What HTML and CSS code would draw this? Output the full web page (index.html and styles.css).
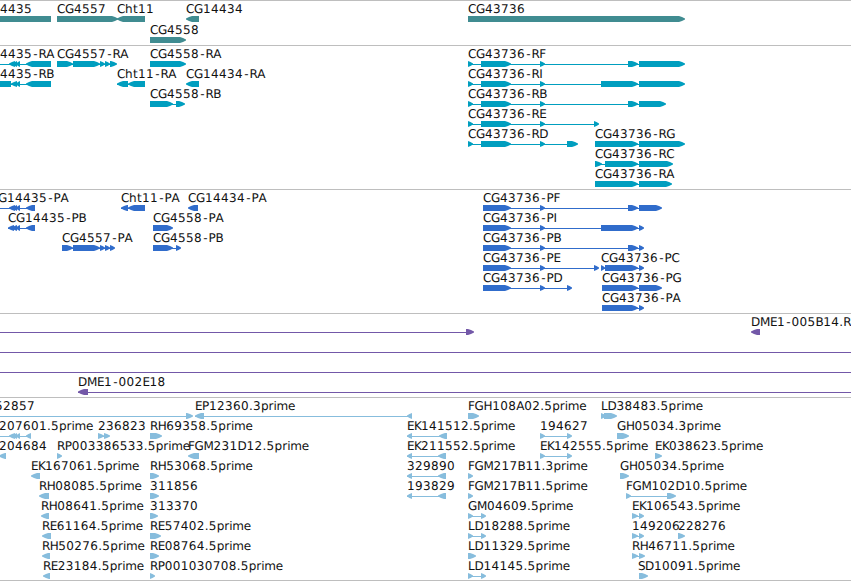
FILE: index.html
```html
<!DOCTYPE html>
<html lang="en">
<head>
    <meta charset="UTF-8">
    <meta name="viewport" content="width=device-width, initial-scale=1.0">
    <title>CG43736 region</title>
    <link rel="stylesheet" href="styles.css">
</head>
<body>
    <main class="browser" id="browser"></main>
    <script src="tracks.js"></script>
</body>
</html>
```
FILE: styles.css
```css
* {
    margin: 0;
    padding: 0;
    box-sizing: border-box;
}

body {
    background: #fff;
    overflow: hidden;
}

.browser {
    display: flex;
    flex-direction: column;
    width: 851px;
    height: 581px;
    border-bottom: 1px solid #bebebe;
}

.track {
    border-top: 1px solid #bebebe;
    overflow: hidden;
}

.track svg {
    display: block;
    width: 851px;
}

.track text {
    font-family: "DejaVu Sans", sans-serif;
    font-size: 12px;
    fill: #111;
    text-rendering: geometricPrecision;
}

.gene {
    color: #408c91;
}

.transcript {
    color: #009ebf;
}

.protein {
    color: #306ccb;
}

.clone {
    color: #7358a8;
}

.est {
    color: #87bddd;
}

.block,
.intron {
    fill: currentColor;
}
```
FILE: tracks.js
```js
// feature: [row, label, label x, strand, blocks, line start, line end]
const tracks = [
    { type: 'gene', height: 44, pitch: 21, features: [
        [0, 'CG14435', -25, 0, [[-25, 51]]],
        [0, 'CG4557', 57, 1, [[57, 118]]],
        [0, 'Cht11', 117, -1, [[117, 145]]],
        [0, 'CG14434', 186, -1, [[186, 199]]],
        [0, 'CG43736', 468, 1, [[468, 685]]],
        [1, 'CG4558', 150, 1, [[150, 186]]]
    ] },
    { type: 'transcript', height: 143, pitch: 20, features: [
        [0, 'CG14435-RA', -25, -1, [[9, 15], [13, 17], [16, 20], [26, 51]], -25],
        [0, 'CG4557-RA', 57, 1, [[57, 73], [73, 100], [100, 105], [105, 110], [110, 117]]],
        [0, 'CG4558-RA', 150, 1, [[150, 186]]],
        [0, 'CG43736-RF', 468, 1, [[468, 473], [481, 511], [540, 545], [628, 638], [639, 685]]],
        [1, 'CG14435-RB', -25, -1, [[-25, 11], [11, 17], [16, 20], [26, 51]]],
        [1, 'Cht11-RA', 117, -1, [[117, 128], [128, 145]]],
        [1, 'CG14434-RA', 186, -1, [[186, 199]]],
        [1, 'CG43736-RI', 468, 1, [[468, 473], [481, 511], [540, 545], [601, 638], [639, 685]]],
        [2, 'CG4558-RB', 150, 1, [[150, 173], [176, 185]]],
        [2, 'CG43736-RB', 468, 1, [[468, 473], [481, 511], [540, 545], [628, 638], [639, 666]]],
        [3, 'CG43736-RE', 468, 1, [[468, 473], [481, 511], [540, 545], [594, 599]]],
        [4, 'CG43736-RD', 468, 1, [[468, 473], [481, 511], [540, 545], [567, 578]]],
        [4, 'CG43736-RG', 595, 1, [[595, 638], [639, 685]]],
        [5, 'CG43736-RC', 595, 1, [[595, 602], [605, 638], [639, 673]]],
        [6, 'CG43736-RA', 595, 1, [[595, 638], [639, 672]]]
    ] },
    { type: 'protein', height: 123, pitch: 20, features: [
        [0, 'CG14435-PA', -10, -1, [[9, 15], [13, 17], [16, 20], [26, 35]], -10],
        [0, 'Cht11-PA', 121, -1, [[121, 128], [128, 145]]],
        [0, 'CG14434-PA', 188, -1, [[188, 198]]],
        [0, 'CG43736-PF', 483, 1, [[483, 511], [540, 545], [628, 638], [639, 662]]],
        [1, 'CG14435-PB', 8, -1, [[8, 14], [12, 17], [16, 20], [26, 35]]],
        [1, 'CG4558-PA', 153, 1, [[153, 173]]],
        [1, 'CG43736-PI', 483, 1, [[483, 511], [540, 545], [601, 638], [639, 644]]],
        [2, 'CG4557-PA', 62, 1, [[62, 73], [73, 100], [100, 105], [105, 110], [110, 115]]],
        [2, 'CG4558-PB', 153, 1, [[153, 173], [176, 181]]],
        [2, 'CG43736-PB', 483, 1, [[483, 511], [540, 545], [628, 638], [639, 644]]],
        [3, 'CG43736-PE', 483, 1, [[483, 511], [540, 545], [594, 599]]],
        [3, 'CG43736-PC', 601, 1, [[601, 605], [605, 638], [639, 644]]],
        [4, 'CG43736-PD', 483, 1, [[483, 511], [540, 545], [567, 572]]],
        [4, 'CG43736-PG', 602, 1, [[602, 638], [639, 662]]],
        [5, 'CG43736-PA', 602, 1, [[602, 638], [639, 644]]]
    ] },
    { type: 'clone', height: 83, pitch: 20, features: [
        [0, '', 0, 1, [[466, 474]], 0],
        [0, 'DME1-005B14.R', 751, -1, [[751, 760]]],
        [1, '', 0, 1, [], 0, 851],
        [2, '', 0, 1, [], 0, 851],
        [3, 'DME1-002E18', 78, -1, [[78, 88]], 78, 851]
    ] },
    { type: 'est', height: 182, pitch: 20, features: [
        [0, '52857', -5, 1, [[186, 193]], 0],
        [0, 'EP12360.3prime', 195, -1, [[195, 204], [407, 412]]],
        [0, 'FGH108A02.5prime', 468, 1, [[468, 479]]],
        [0, 'LD38483.5prime', 601, 1, [[601, 606], [604, 617]]],
        [1, '207601.5prime', -1, -1, [[9, 15], [13, 17], [16, 20], [26, 31]], 0],
        [1, '236823', 98, 1, [[98, 104], [104, 110]]],
        [1, 'RH69358.5prime', 150, 1, [[150, 162]]],
        [1, 'EK141512.5prime', 407, -1, [[407, 412], [439, 447]]],
        [1, '194627', 540, 1, [[540, 545], [567, 572]]],
        [1, 'GH05034.3prime', 617, 1, [[617, 629]]],
        [2, '204684', -1, -1, [[-1, 6]]],
        [2, 'RP003386533.5prime', 57, 1, [[57, 62]]],
        [2, 'FGM231D12.5prime', 188, -1, [[188, 199]]],
        [2, 'EK211552.5prime', 407, -1, [[407, 412], [438, 446]]],
        [2, 'EK142555.5prime', 540, 1, [[540, 545], [567, 572]]],
        [2, 'EK038623.5prime', 655, 1, [[655, 662]]],
        [3, 'EK167061.5prime', 31, -1, [[31, 40]]],
        [3, 'RH53068.5prime', 150, 1, [[150, 159]]],
        [3, '329890', 407, -1, [[407, 412], [438, 446]]],
        [3, 'FGM217B11.3prime', 468, 1, [[468, 473]]],
        [3, 'GH05034.5prime', 620, 1, [[620, 629]]],
        [4, 'RH08085.5prime', 39, -1, [[39, 49]]],
        [4, '311856', 150, 1, [[150, 159]]],
        [4, '193829', 407, -1, [[407, 412], [438, 446]]],
        [4, 'FGM217B11.5prime', 468, 1, [[468, 473]]],
        [4, 'FGM102D10.5prime', 626, 1, [[626, 631], [667, 676]]],
        [5, 'RH08641.5prime', 41, -1, [[41, 49]]],
        [5, '313370', 150, 1, [[150, 158]]],
        [5, 'GM04609.5prime', 468, 1, [[468, 473], [481, 486]]],
        [5, 'EK106543.5prime', 632, 1, [[632, 638], [639, 644]]],
        [6, 'RE61164.5prime', 42, -1, [[42, 51]]],
        [6, 'RE57402.5prime', 150, 1, [[150, 161]]],
        [6, 'LD18288.5prime', 468, 1, [[468, 473], [481, 486]]],
        [6, '149206', 632, 1, [[632, 638], [639, 644]]],
        [6, '228276', 678, 1, [[678, 685]]],
        [7, 'RH50276.5prime', 42, -1, [[42, 50]]],
        [7, 'RE08764.5prime', 150, 1, [[150, 159]]],
        [7, 'LD11329.5prime', 468, 1, [[468, 476]]],
        [7, 'RH46711.5prime', 632, 1, [[632, 638], [639, 645]]],
        [8, 'RE23184.5prime', 43, -1, [[43, 50]]],
        [8, 'RP001030708.5prime', 150, 1, [[150, 155]]],
        [8, 'LD14145.5prime', 468, 1, [[468, 473], [481, 486]]],
        [8, 'SD10091.5prime', 638, 1, [[639, 648]]]
    ] }
];

// label letter pitch, digits and anything not listed are 8px
const advance = { G: 9, H: 8.6, D: 9, M: 10, R: 7.7, F: 6.6, B: 7.8, E: 7, K: 7, L: 6.6, P: 7, S: 7,
    I: 4, '-': 6.5, '.': 4, t: 5, r: 5, i: 3, m: 11.5, e: 7, p: 7.6 };

function labelPositions(label, x) {
    const positions = [];
    for (const c of label) {
        positions.push((c === '-' ? x + 1.2 : x).toFixed(1));
        x += advance[c] || 8;
    }
    return positions.join(' ');
}

// box with a rounded-off head that ends in a point on the strand's side
function blockPath([start, end], strand, y) {
    const head = strand ? Math.min(6, end - start) : 0;
    const back = strand < 0 ? end : start;
    const tip = strand < 0 ? start : end;
    const neck = strand < 0 ? start + head : end - head;
    const mid = (neck + tip) / 2;
    return `M${back} ${y}H${neck}L${mid} ${y + 1}L${tip} ${y + 2.5}V${y + 3.5}`
        + `L${mid} ${y + 5}L${neck} ${y + 6}H${back}Z`;
}

function boxPath([start, end], y) {
    return `M${start} ${y}H${end}V${y + 6}H${start}Z`;
}

function drawTrack(track) {
    let shapes = '';
    for (const [row, label, x, strand, blocks, lineStart, lineEnd] of track.features) {
        const y = row * track.pitch;
        const from = lineStart ?? blocks[0][0];
        const to = lineEnd ?? blocks[blocks.length - 1][1] - 1;
        if (blocks.length !== 1 || lineStart !== undefined) {
            shapes += `<rect class="intron" x="${from}" y="${y + 18}" width="${to - from}" height="1"/>`;
        }
        for (const block of blocks) {
            const d = strand ? blockPath(block, strand, y + 15) : boxPath(block, y + 15);
            shapes += `<path class="block" d="${d}"/>`;
        }
        if (label) {
            shapes += `<text x="${labelPositions(label, x)}" y="${y + 12}">${label}</text>`;
        }
    }
    return `<section class="track ${track.type}"><svg height="${track.height}">${shapes}</svg></section>`;
}

document.getElementById('browser').innerHTML = tracks.map(drawTrack).join('');
```
